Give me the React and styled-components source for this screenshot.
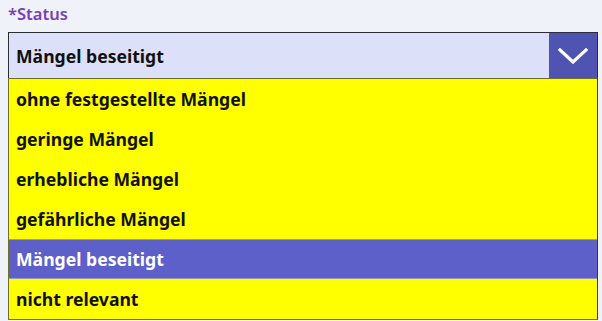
import styled, { createGlobalStyle } from "styled-components";

const GlobalStyle = createGlobalStyle`
  body {
    margin: 0;
    background: #eff2f8;
    font-family: "Noto Sans", "Open Sans", sans-serif;
  }
`;

const Field = styled.div`
  padding: 0 4px 0 8px;
  width: 590px;
`;

const Label = styled.div`
  height: 32px;
  padding-top: 3px;
  box-sizing: border-box;
  color: #7a3eb4;
  font-size: 16.5px;
  font-weight: 600;
  line-height: 22px;
`;

const Select = styled.div`
  display: flex;
  height: 46px;
  box-sizing: border-box;
  border: 1px solid #2c2c34;
  border-bottom: none;
  background: #dde0f9;
`;

const Value = styled.div`
  flex: 1;
  display: flex;
  align-items: center;
  padding-left: 7px;
  font-size: 17.6px;
  font-weight: 700;
  color: #111;
`;

const Toggle = styled.div`
  width: 48px;
  display: flex;
  align-items: center;
  justify-content: center;
  background: #4f53b1;
`;

const List = styled.div`
  border: 1px solid #6f6f2a;
  border-right-color: #3a3a30;
  background: #ffff00;
`;

const Option = styled.div`
  height: 40px;
  box-sizing: border-box;
  display: flex;
  align-items: center;
  padding-left: 7px;
  font-size: 17.6px;
  font-weight: 700;
  color: ${(p) => (p.$active ? "#fff" : "#111")};
  background: ${(p) => (p.$active ? "#5c60c8" : "transparent")};
  border-top: 1px solid ${(p) => (p.$active ? "#9a9ab4" : "transparent")};
  border-bottom: 1px solid ${(p) => (p.$active ? "#9a9ab4" : "transparent")};
`;

const options = [
  "ohne festgestellte Mängel",
  "geringe Mängel",
  "erhebliche Mängel",
  "gefährliche Mängel",
  "Mängel beseitigt",
  "nicht relevant",
];

export default function App() {
  const selected = "Mängel beseitigt";
  return (
    <>
      <GlobalStyle />
      <Field>
        <Label>*Status</Label>
        <Select>
          <Value>{selected}</Value>
          <Toggle>
            <svg width="30" height="18" viewBox="0 0 30 18">
              <path
                d="M2 3 L15 15 L28 3"
                fill="none"
                stroke="#fff"
                strokeWidth="3.2"
                strokeLinecap="square"
              />
            </svg>
          </Toggle>
        </Select>
        <List>
          {options.map((o) => (
            <Option key={o} $active={o === selected}>
              {o}
            </Option>
          ))}
        </List>
      </Field>
    </>
  );
}
